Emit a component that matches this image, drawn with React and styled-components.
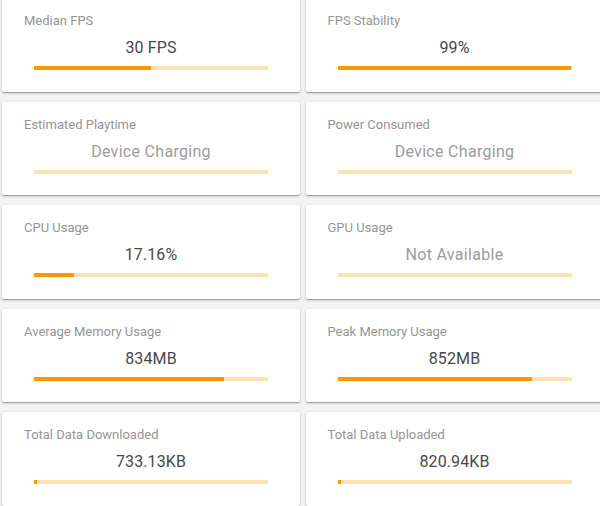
import React from "react";
import styled, { createGlobalStyle } from "styled-components";

const GlobalStyle = createGlobalStyle`
  html, body {
    margin: 0;
    padding: 0;
    background: #f3f3f3;
    overflow: hidden;
  }
  body {
    font-family: Roboto, "Liberation Sans", Arial, sans-serif;
  }
`;

const Board = styled.div`
  display: grid;
  grid-template-columns: 298px 298px;
  column-gap: 5.5px;
  row-gap: 10px;
  width: 610px;
  margin-top: -2px;
  padding-left: 2px;
`;

const Card = styled.section`
  box-sizing: border-box;
  height: 93.5px;
  padding-top: 15px;
  background: #ffffff;
  border-radius: 2px;
  box-shadow: 0 1px 3px rgba(0, 0, 0, 0.22), 0 1px 1px rgba(0, 0, 0, 0.14),
    0 2px 1px -1px rgba(0, 0, 0, 0.12);
  display: flex;
  flex-direction: column;
`;

const Label = styled.div`
  margin-left: 22px;
  font-size: 13px;
  line-height: 16px;
  color: #959595;
`;

const Value = styled.div`
  margin-top: 8px;
  text-align: center;
  font-size: 16px;
  line-height: 21px;
  letter-spacing: ${(p) => (p.$muted ? "0.3px" : "0.1px")};
  color: ${(p) => (p.$muted ? "#9c9c9c" : "#484848")};
`;

const Track = styled.div`
  margin: 8px 32px 0;
  height: 4px;
  background: #ffe0b2;
  overflow: hidden;
`;

const Fill = styled.div`
  height: 100%;
  background: #ff9800;
`;

const metrics = [
  { label: "Median FPS", value: "30 FPS", pct: 50 },
  { label: "FPS Stability", value: "99%", pct: 99.6 },
  { label: "Estimated Playtime", value: "Device Charging", pct: 0, muted: true },
  { label: "Power Consumed", value: "Device Charging", pct: 0, muted: true },
  { label: "CPU Usage", value: "17.16%", pct: 17.16 },
  { label: "GPU Usage", value: "Not Available", pct: 0, muted: true },
  { label: "Average Memory Usage", value: "834MB", pct: 81.4 },
  { label: "Peak Memory Usage", value: "852MB", pct: 83.2 },
  { label: "Total Data Downloaded", value: "733.13KB", pct: 1.4 },
  { label: "Total Data Uploaded", value: "820.94KB", pct: 1.6 },
];

function MetricCard({ label, value, pct, muted }) {
  return (
    <Card>
      <Label>{label}</Label>
      <Value $muted={muted}>{value}</Value>
      <Track>
        <Fill style={{ width: `${pct}%` }} />
      </Track>
    </Card>
  );
}

export default function App() {
  return (
    <>
      <GlobalStyle />
      <Board>
        {metrics.map((m) => (
          <MetricCard key={m.label} {...m} />
        ))}
      </Board>
    </>
  );
}
